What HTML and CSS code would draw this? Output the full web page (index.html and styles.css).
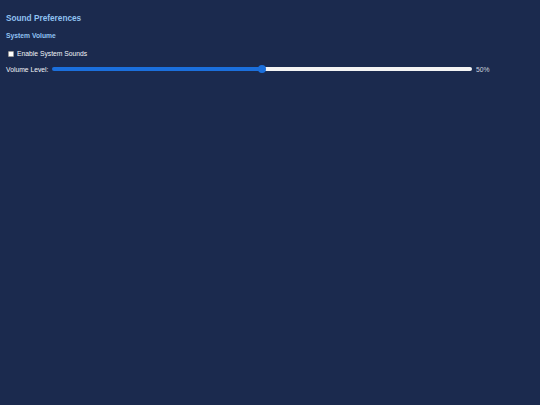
FILE: index.html
```html
<!DOCTYPE html>
<html lang="en">
<head>
<meta charset="utf-8">
<title>Sound Preferences</title>
<link rel="stylesheet" href="styles.css">
</head>
<body>
<main class="panel">
  <h1 class="title">Sound Preferences</h1>
  <section class="group">
    <h2 class="group-title">System Volume</h2>
    <label class="check-row">
      <input type="checkbox" class="check">
      <span>Enable System Sounds</span>
    </label>
    <div class="volume-row">
      <label class="volume-label" for="vol">Volume Level:</label>
      <input id="vol" class="slider" type="range" min="0" max="100" value="50">
      <span class="volume-value">50%</span>
    </div>
  </section>
</main>
</body>
</html>
```

FILE: styles.css
```css
html, body {
  margin: 0;
  padding: 0;
  background: #1b2a4e;
}
body {
  font-family: "Liberation Sans", Arial, sans-serif;
  color: #f2f4f8;
  width: 540px;
  height: 405px;
}
.panel {
  padding: 14px 6px;
}
.title {
  margin: 0;
  font-size: 8.25px;
  line-height: 10px;
  font-weight: bold;
  color: #90c2f2;
}
.group {
  margin-top: 7px;
}
.group-title {
  margin: 0;
  font-size: 6.75px;
  line-height: 9px;
  font-weight: bold;
  color: #90c2f2;
}
.check-row {
  display: flex;
  align-items: center;
  margin-top: 9px;
  height: 9px;
  font-size: 6.75px;
}
.check {
  -webkit-appearance: none;
  appearance: none;
  width: 6px;
  height: 6px;
  margin: 0 3px 0 2px;
  background: #ffffff;
  border: 0.5px solid #9a9a9a;
  border-radius: 1px;
  box-sizing: border-box;
}
.volume-row {
  display: flex;
  align-items: center;
  margin-top: 6px;
  height: 10px;
  font-size: 6.75px;
}
.volume-label {
  width: 46px;
}
.slider {
  -webkit-appearance: none;
  appearance: none;
  width: 420px;
  height: 4px;
  margin: 0 4px 0 0;
  padding: 0;
  border-radius: 2px;
  background: linear-gradient(to right, #1b6fdc 0%, #1b6fdc 50%, #f4f4f4 50%, #f4f4f4 100%);
  outline: none;
}
.slider::-webkit-slider-thumb {
  -webkit-appearance: none;
  appearance: none;
  width: 8px;
  height: 8px;
  border-radius: 50%;
  background: #1b6fdc;
  border: none;
}
.volume-value {
  color: #d0d4de;
}
```
